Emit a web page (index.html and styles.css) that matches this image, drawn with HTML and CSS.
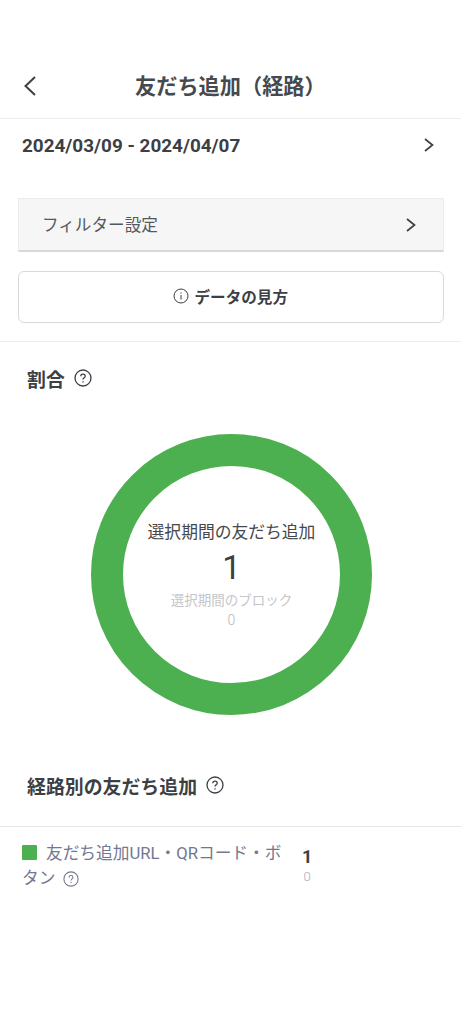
FILE: index.html
```html
<!DOCTYPE html>
<html lang="ja">
<head>
    <meta charset="UTF-8">
    <meta name="viewport" content="width=device-width, initial-scale=1.0">
    <title>友だち追加（経路）</title>
    <link rel="stylesheet" href="styles.css">
</head>
<body>
    <header class="topbar">
        <svg class="back-icon" width="16" height="22" viewBox="0 0 16 22"><path d="M13 2 L3.5 11 L13 20"/></svg>
        <h1 class="title">友だち追加（経路）</h1>
    </header>

    <div class="date-row">
        <span class="date-text">2024/03/09 - 2024/04/07</span>
        <svg class="chevron" width="12" height="16" viewBox="0 0 12 16"><path d="M2 2 L9.5 8 L2 14"/></svg>
    </div>

    <div class="filter-row">
        <span class="filter-label">フィルター設定</span>
        <svg class="chevron" width="12" height="16" viewBox="0 0 12 16"><path d="M2 2 L9.5 8 L2 14"/></svg>
    </div>

    <div class="guide-button">
        <svg class="info-icon" width="16" height="16" viewBox="0 0 16 16">
            <circle cx="8" cy="8" r="7"/>
            <path d="M8 7 V11.6"/>
            <path d="M8 4.4 V5.6"/>
        </svg>
        <span>データの見方</span>
    </div>

    <section class="ratio">
        <div class="section-head">
            <h2 class="section-title">割合</h2>
            <svg class="help-icon" width="18" height="18" viewBox="0 0 18 18">
                <circle cx="9" cy="9" r="8"/>
                <path d="M6.8 7.2 C6.8 4.4 11.2 4.4 11.2 7.2 C11.2 8.8 9 8.8 9 10.6"/>
                <path d="M9 12.2 V13.4"/>
            </svg>
        </div>
        <div class="donut">
            <div class="donut-label">選択期間の友だち追加</div>
            <div class="donut-value">1</div>
            <div class="donut-sub">選択期間のブロック</div>
            <div class="donut-sub-value">0</div>
        </div>
    </section>

    <section class="routes">
        <div class="section-head">
            <h2 class="section-title">経路別の友だち追加</h2>
            <svg class="help-icon" width="18" height="18" viewBox="0 0 18 18">
                <circle cx="9" cy="9" r="8"/>
                <path d="M6.8 7.2 C6.8 4.4 11.2 4.4 11.2 7.2 C11.2 8.8 9 8.8 9 10.6"/>
                <path d="M9 12.2 V13.4"/>
            </svg>
        </div>
        <div class="route-row">
            <div class="route-name">
                <span class="swatch"></span>友だち追加URL・QRコード・ボタン
                <svg class="help-small" width="16" height="16" viewBox="0 0 18 18">
                    <circle cx="9" cy="9" r="8"/>
                    <path d="M6.8 7.2 C6.8 4.4 11.2 4.4 11.2 7.2 C11.2 8.8 9 8.8 9 10.6"/>
                    <path d="M9 12.2 V13.4"/>
                </svg>
            </div>
            <div class="route-counts">
                <div class="route-value">1</div>
                <div class="route-sub">0</div>
            </div>
        </div>
    </section>
</body>
</html>
```

FILE: styles.css
```css
* {
    margin: 0;
    padding: 0;
    box-sizing: border-box;
    font-family: Roboto, 'Noto Sans CJK JP', sans-serif;
}

body {
    background-color: white;
    color: #3c3f44;
    width: 461px;
    height: 1024px;
    overflow: hidden;
    padding-top: 54px;
}

svg {
    fill: none;
    stroke: #3c3f44;
    flex-shrink: 0;
}

.topbar {
    display: flex;
    align-items: center;
    height: 65px;
    padding-left: 22px;
    border-bottom: 1px solid #ececec;
}

.back-icon {
    stroke-width: 2;
}

.title {
    font-size: 21.2px;
    font-weight: 700;
    line-height: 65px;
    margin-left: 97px;
    color: #46494e;
}

.date-row {
    display: flex;
    justify-content: space-between;
    align-items: center;
    height: 52px;
    padding: 0 26px 0 22px;
}

.date-text {
    font-size: 18.9px;
    font-weight: 700;
}

.chevron {
    stroke-width: 1.7;
}

.filter-row {
    display: flex;
    justify-content: space-between;
    align-items: center;
    height: 54px;
    margin: 27px 17.5px 0 18px;
    padding: 0 26px 0 23px;
    background-color: #f6f6f6;
    border: 1px solid #ececec;
    border-bottom: 2px solid #d8d8d8;
}

.filter-label {
    font-size: 16.6px;
    color: #55585c;
    margin-top: -2px;
}

.guide-button {
    display: flex;
    justify-content: center;
    align-items: center;
    gap: 5px;
    height: 52px;
    margin: 19px 17.5px 0 18px;
    padding-bottom: 3px;
    border: 1px solid #d9d9d9;
    border-radius: 6px;
    font-size: 15.6px;
    font-weight: 700;
}

.info-icon {
    stroke-width: 1;
}

.ratio {
    margin-top: 18px;
    border-top: 1px solid #ececec;
    padding-top: 22px;
}

.section-head {
    display: flex;
    align-items: center;
    gap: 9px;
    height: 28px;
    padding-left: 27px;
}

.section-title {
    font-size: 18.9px;
    font-weight: 700;
    color: #3c3f44;
}

.help-icon {
    stroke-width: 1.3;
}

.donut {
    width: 281px;
    height: 281px;
    margin: 42px 0 0 91px;
    border: 32px solid #4caf50;
    border-radius: 50%;
    text-align: center;
    padding-top: 54px;
}

.donut-label {
    font-size: 16.8px;
    line-height: 24px;
    margin: 0 -10px;
    color: #45484c;
}

.donut-value {
    font-size: 33px;
    line-height: 44px;
    margin-top: 2px;
    color: #3c3f44;
}

.donut-sub {
    font-size: 13.5px;
    line-height: 20px;
    color: #c4c6c9;
}

.donut-sub-value {
    font-size: 14px;
    font-weight: 300;
    line-height: 20px;
    color: #b4b6ba;
}

.routes {
    margin-top: 56px;
}

.route-row {
    display: flex;
    margin-top: 27px;
    border-top: 1px solid #e6e6e6;
    padding: 14px 0 0 22px;
}

.route-name {
    width: 266px;
    font-size: 16.7px;
    line-height: 25px;
    color: #737890;
}

.swatch {
    display: inline-block;
    width: 15px;
    height: 15px;
    margin-right: 9px;
    border-radius: 1px;
    background-color: #4caf50;
    vertical-align: -1px;
}

.help-small {
    stroke: #737890;
    stroke-width: 1.2;
    vertical-align: -3px;
    margin-left: 3px;
}

.route-counts {
    margin-left: 14px;
    padding-top: 5px;
    text-align: center;
}

.route-value {
    font-size: 18px;
    font-weight: 700;
    line-height: 22px;
}

.route-sub {
    font-size: 13px;
    font-weight: 300;
    line-height: 18px;
    color: #a9acb2;
}
```
